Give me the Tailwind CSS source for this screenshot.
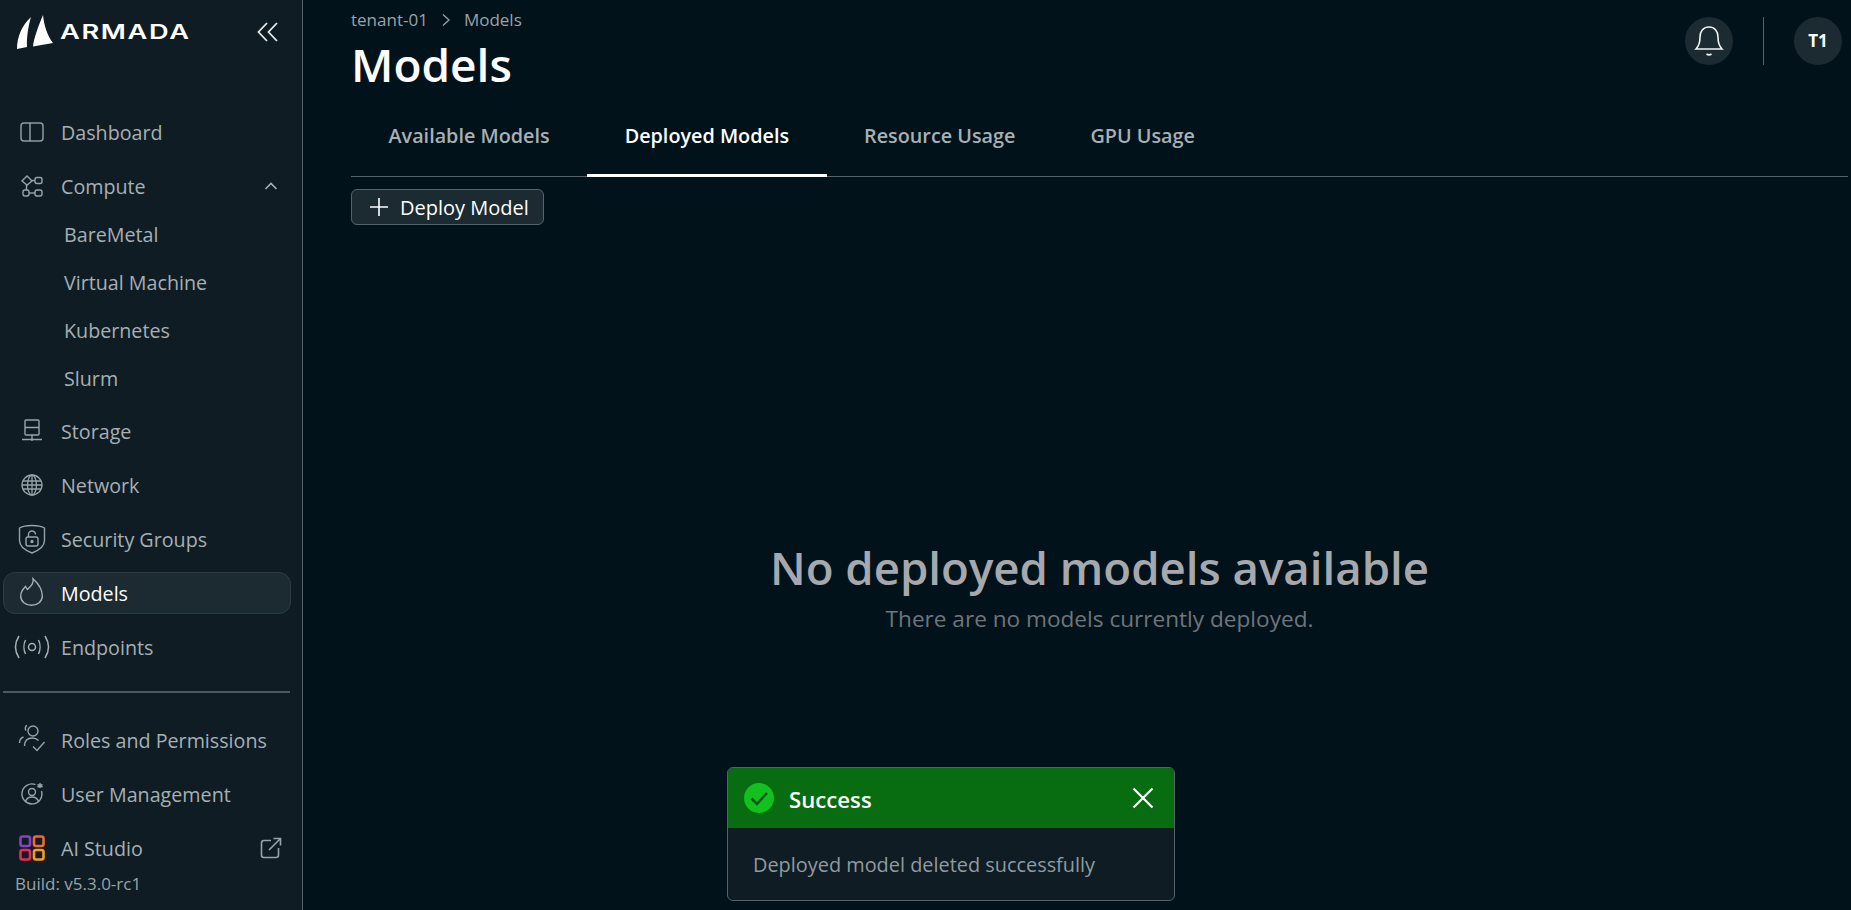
<!DOCTYPE html>
<html lang="en">
  <head>
    <meta charset="UTF-8" />
    <title>Models</title>
    <script src="https://cdn.jsdelivr.net/npm/@tailwindcss/browser@4"></script>
  </head>
  <body class="h-[910px] overflow-hidden bg-[#02121a] font-['Open_Sans','Noto_Sans',sans-serif]">
    <div class="relative flex h-[910px] w-[1851px]">
      <!-- sidebar -->
      <aside class="flex h-full w-[303px] shrink-0 flex-col border-r border-[#56636a] bg-[#0f1c23] pl-[3px] pr-[12px] text-[19.7px] text-[#a6b0b5] [&_span]:translate-y-[1px]">
        <div class="flex h-[111px] items-start pl-[14px] pt-[15px]">
          <svg class="h-[34px] w-[37px] shrink-0" viewBox="0 0 37 34" fill="#fff">
            <path d="M0 34C0 22 5 10 14 2 11 12 9.500 24 10 32Z" />
            <path d="M26 0C22 10 17 22 16 31.500L36 28C30 20 27 10 26 0Z" />
          </svg>
          <span class="ml-[6px] mt-[4px] origin-left scale-x-[1.36] font-['Inter',sans-serif] text-[20px] font-semibold leading-[24px] tracking-[1.2px] text-white">ARMADA</span>
          <svg class="ml-auto mr-[11px] mt-[7px] h-[20px] w-[22px]" viewBox="0 0 22 20" fill="none" stroke="#e6eaec" stroke-width="1.8"><path d="M10 1 1.500 10 10 19M20 1 11.500 10 20 19" /></svg>
        </div>

        <nav class="flex flex-col gap-3">
          <div class="flex h-[42px] items-center gap-[17px] pl-[17px]">
            <svg class="h-[24px] w-[24px]" viewBox="0 0 24 24" fill="none" stroke="#8f9ba1" stroke-width="1.5"><rect x="1" y="3" width="22" height="18" rx="3" /><path d="M10 3v18" /></svg>
            <span>Dashboard</span>
          </div>

          <div class="flex flex-col">
            <div class="flex h-[42px] items-center gap-[17px] pl-[17px]">
              <svg class="h-[24px] w-[24px]" viewBox="0 0 24 24" fill="none" stroke="#98a3a9" stroke-width="1.4"><path d="M7 2 12 7 7 11 2 7Z" /><rect x="15" y="3.500" width="7" height="6" rx="2" /><path d="M12 6.500h3" /><path d="M6.500 11v5" /><rect x="3" y="16" width="6" height="6" rx="2" /><rect x="15" y="16" width="7" height="6" rx="2" /><path d="M9 19h6" /></svg>
              <span>Compute</span>
              <svg class="ml-auto mr-[12px] h-[10px] w-[14px]" viewBox="0 0 14 10" fill="none" stroke="#a6b0b5" stroke-width="1.6"><path d="M1.500 8 7 2.500 12.500 8" /></svg>
            </div>
            <div class="mt-[7px] flex flex-col gap-2 pl-[61px]">
              <div class="flex h-[40px] items-center pt-[2px]">BareMetal</div>
              <div class="flex h-[40px] items-center pt-[2px]">Virtual Machine</div>
              <div class="flex h-[40px] items-center pt-[2px]">Kubernetes</div>
              <div class="flex h-[40px] items-center pt-[2px]">Slurm</div>
            </div>
          </div>

          <div class="flex h-[42px] items-center gap-[17px] pl-[17px]">
            <svg class="h-[24px] w-[24px]" viewBox="0 0 24 24" fill="none" stroke="#98a3a9" stroke-width="1.4"><rect x="5" y="1" width="14" height="15" rx="1" /><path d="M5 8.500h14M12 16v6M2 20.500h20" /></svg>
            <span>Storage</span>
          </div>
          <div class="flex h-[42px] items-center gap-[17px] pl-[17px]">
            <svg class="h-[24px] w-[24px]" viewBox="0 0 24 24" fill="none" stroke="#98a3a9" stroke-width="1.3"><circle cx="12" cy="12" r="10" /><ellipse cx="12" cy="12" rx="4.500" ry="10" /><path d="M3 8h18M3 16h18M2 12h20M12 2v20" /></svg>
            <span>Network</span>
          </div>
          <div class="flex h-[42px] items-center gap-[17px] pl-[17px]">
            <svg class="h-[30px] w-[24px] overflow-visible" viewBox="0 0 24 30" fill="none" stroke="#98a3a9" stroke-width="1.4"><path d="M12 1.500C7 1.500 3 2-.500 4V16.500c0 6 6 10 12.500 12.500C18.500 26.500 24.500 22.500 24.500 16.500V4C21 2 17 1.500 12 1.500Z" /><rect x="6" y="13" width="12" height="9" rx="2" /><path d="M8.500 13v-2.500a3.500 3.500 0 0 1 7 0" /><circle cx="12" cy="17.500" r="1" fill="#98a3a9" /></svg>
            <span>Security Groups</span>
          </div>
          <div class="-mr-[1px] flex h-[42px] items-center gap-[17px] rounded-[12px] border border-[#2d3b42] bg-[#1c2a31] pl-[16px] text-white">
            <svg class="h-[28px] w-[23px] -translate-y-[1px] overflow-visible" viewBox="0 0 23 28" fill="none" stroke="#a6b0b5" stroke-width="1.4"><path d="M13 .700c1 4.800-2 7-5.500 10.800C6.500 10.500 6 9.500 5.500 8.500 2.500 11.500.700 14.500.700 18c0 5.500 4.800 9.300 10.800 9.300s10.800-3.800 10.800-9.300c0-6.500-4.500-13-9.300-17.300Z" /></svg>
            <span class="ml-[1px]">Models</span>
          </div>
          <div class="flex h-[42px] items-center gap-[17px] pl-[17px]">
            <svg class="h-[24px] w-[24px] overflow-visible" viewBox="0 0 24 24" fill="none" stroke="#a6b0b5" stroke-width="1.5"><circle cx="12" cy="12" r="3.500" /><path d="M5.500 5C3.500 9 3.500 15 5.500 19M18.500 5c2 4 2 10 0 14M-1 1C-5.500 8-5.500 16-1 23M25 1c4.500 7 4.500 15 0 22" /></svg>
            <span>Endpoints</span>
          </div>
        </nav>

        <div class="mt-[23px] mb-[26px] h-[2px] shrink-0 bg-[#4c5a60]"></div>

        <div class="flex flex-col gap-3">
          <div class="flex h-[42px] items-center gap-[17px] pl-[17px]">
            <svg class="h-[28px] w-[28px] -ml-[2px] -mr-[2px] -translate-y-[2px] overflow-visible" viewBox="0 0 28 28" fill="none" stroke="#98a3a9" stroke-width="1.4"><circle cx="15" cy="7" r="5" /><path d="M8 6.500C6.500 4.500 7.500 2 9 1.500M1.500 19c0-3 1.500-5 4-6M6.500 22c0-5 3-8 8-8 2.500 0 4.500 1 6 2.500M15 22.500l4 4 7.500-8.500" /></svg>
            <span>Roles and Permissions</span>
          </div>
          <div class="flex h-[42px] items-center gap-[17px] pl-[17px]">
            <svg class="h-[24px] w-[24px] overflow-visible" viewBox="0 0 24 24" fill="none" stroke="#98a3a9" stroke-width="1.4"><path d="M15.500 2.600A10 10 0 1 0 21.500 9" /><circle cx="12" cy="10" r="3.500" /><path d="M5.500 19.500c1-3 3.500-4.500 6.500-4.500s5.500 1.500 6.500 4.500M20 1v5M17.500 2.500l5 2.500M22.500 2.500l-5 2.500" /></svg>
            <span>User Management</span>
          </div>
          <div class="flex h-[42px] items-center gap-[17px] pl-[17px]">
            <svg class="h-[26px] w-[26px] -mx-[1px]" viewBox="0 0 26 26" fill="none" stroke-width="2.600">
              <rect x="1.500" y="1.500" width="9.500" height="9.500" rx="2" stroke="#8b3fc4" /><rect x="15" y="1.500" width="9.500" height="9.500" rx="2" stroke="#ef6a2e" /><rect x="1.500" y="15" width="9.500" height="9.500" rx="2" stroke="#ea2c55" /><rect x="15" y="15" width="9.500" height="9.500" rx="2" stroke="#f59a23" />
            </svg>
            <span>AI Studio</span>
            <svg class="ml-auto mr-[8px] h-[22px] w-[22px]" viewBox="0 0 22 22" fill="none" stroke="#98a3a9" stroke-width="1.6"><path d="M11 3.500H4a2.500 2.500 0 0 0-2.500 2.500v12A2.500 2.500 0 0 0 4 20.500h12a2.500 2.500 0 0 0 2.500-2.500v-7M9 13 20.500 1.500M13.500 1.500h7v7" /></svg>
          </div>
          <div class="-mt-[8px] pl-[12px] text-[17px] leading-[22px] text-[#98a3a9]">Build: v5.3.0-rc1</div>
        </div>
      </aside>

      <!-- main -->
      <main class="flex min-w-0 flex-1 flex-col pl-[48px] pr-[3px]">
        <header class="flex items-start justify-between pr-[6px]">
          <div>
            <div class="flex h-[40px] items-center text-[17px] text-[#98a3a9]">
              <span>tenant-01</span>
              <svg class="mx-[13px] h-[14px] w-[10px]" viewBox="0 0 10 14" fill="none" stroke="#98a3a9" stroke-width="1.300"><path d="M2 1.500 8 7 2 12.500" /></svg>
              <span>Models</span>
            </div>
            <h1 class="text-[46px] font-semibold leading-[48px] text-white">Models</h1>
          </div>
          <div class="mt-[17px] flex items-center">
            <div class="flex h-[48px] w-[48px] items-center justify-center rounded-full bg-[#1c2a31]">
              <svg class="h-[34px] w-[30px]" viewBox="0 0 30 34" fill="none" stroke="#f2f4f5" stroke-width="1.600"><path d="M2 25h26c-3-3-4-7-4-12 0-6-3.500-10-9-10S6 7 6 13c0 5-1 9-4 12Z" /><path d="M12.500 30c1.500 1 3.500 1 5 0" stroke-width="1.800" /></svg>
            </div>
            <div class="mx-[30px] h-[48px] w-px bg-[#56636a]"></div>
            <div class="flex h-[48px] w-[48px] items-center justify-center rounded-full bg-[#1c2a31] text-[17px] font-bold text-white">T1</div>
          </div>
        </header>

        <div class="mt-[33px] flex h-[56px] border-b border-[#56636a] text-[19.800px] font-semibold leading-[26px] text-[#a6b0b5]">
          <div class="h-[56px] px-[37.500px] pt-[2px]">Available Models</div>
          <div class="h-[56px] border-b-[3px] border-white px-[37.500px] pt-[2px] text-white">Deployed Models</div>
          <div class="h-[56px] px-[37.500px] pt-[2px]">Resource Usage</div>
          <div class="h-[56px] px-[37.500px] pt-[2px]">GPU Usage</div>
        </div>

        <div class="mt-[12px]">
          <button class="flex h-[36px] w-[193px] items-center gap-[12px] rounded-[6px] border border-[#56636a] bg-[#1c2a31] pl-[18px] text-[20px] text-white">
            <svg class="h-[18px] w-[18px]" viewBox="0 0 18 18" fill="none" stroke="#fff" stroke-width="1.600"><path d="M9 0v18M0 9h18" /></svg>
            <span class="translate-y-[1px]">Deploy Model</span>
          </button>
        </div>

        <div class="mt-[313px] flex flex-col items-center text-center">
          <h2 class="text-[45.600px] font-semibold leading-[58px] text-[#a5a9ae]">No deployed models available</h2>
          <p class="mt-[7px] text-[22.600px] leading-[32px] text-[#6d767c]">There are no models currently deployed.</p>
        </div>
      </main>

      <!-- toast -->
      <div class="absolute left-[727px] top-[767px] w-[448px] overflow-hidden rounded-[6px] border border-[#56636a] bg-[#0f1c23]">
        <div class="flex h-[60px] items-center bg-[#086c10] pl-[16px] pr-[20px]">
          <svg class="h-[30px] w-[30px]" viewBox="0 0 30 30"><circle cx="15" cy="15" r="15" fill="#12c01e" /><path d="M7.500 15.500 13 21 23 10" fill="none" stroke="#08591a" stroke-width="2.500" /></svg>
          <span class="ml-[15px] pt-[3px] text-[22.200px] font-semibold text-white">Success</span>
          <svg class="ml-auto h-[22px] w-[22px]" viewBox="0 0 22 22" fill="none" stroke="#fff" stroke-width="2.200"><path d="M1.500 1.500l19 19M20.500 1.500l-19 19" /></svg>
        </div>
        <div class="flex h-[72px] items-center pl-[25px] pt-[2px] text-[19.900px] text-[#8f9ba1]">Deployed model deleted successfully</div>
      </div>
    </div>
  </body>
</html>
